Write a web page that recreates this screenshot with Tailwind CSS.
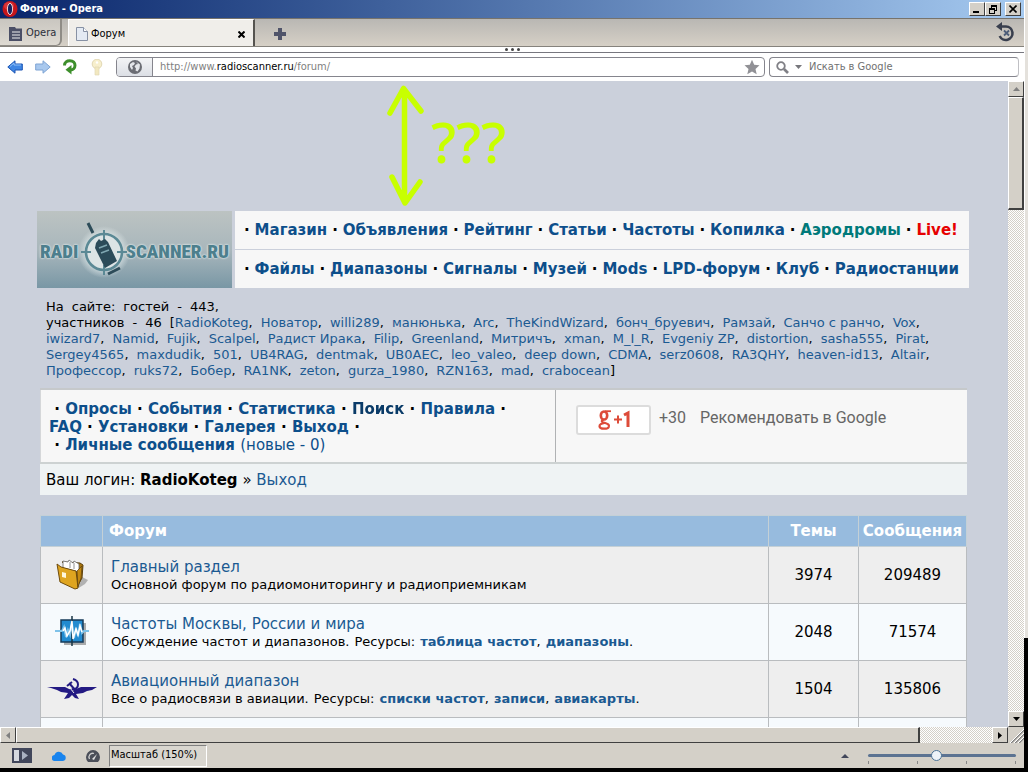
<!DOCTYPE html>
<html lang="ru">
<head>
<meta charset="utf-8">
<title>Форум</title>
<script src="https://cdn.jsdelivr.net/npm/@tailwindcss/browser@4"></script>
</head>
<body class="flex h-screen overflow-hidden bg-black font-['Verdana','DejaVu_Sans',sans-serif] text-black">
<div class="flex min-w-0 flex-1 flex-col bg-[#d4d0c8]">

  <header class="flex h-[18px] shrink-0 items-center bg-linear-to-r from-[#0a246a] to-[#a6caf0] pr-[3px] pl-[2px]">
    <svg class="size-4" viewBox="0 0 16 16"><ellipse cx="8" cy="8" rx="7.5" ry="8" fill="#c4161c"/><ellipse cx="7" cy="5" rx="5" ry="4" fill="#e8494c" opacity=".6"/><ellipse cx="8" cy="8" rx="2.6" ry="5.6" fill="#16225e" stroke="#f3d0d0" stroke-width="1"/></svg>
    <h1 class="ml-[2px] flex-1 font-['Tahoma','DejaVu_Sans_Condensed','DejaVu_Sans',sans-serif] text-[11px] font-bold text-white">Форум - Opera</h1>
    <div class="flex">
      <button aria-label="Свернуть" class="flex h-[14px] w-4 items-end border border-t-white border-r-[#404040] border-b-[#404040] border-l-white bg-[#d4d0c8] pb-[2px] pl-[3px]"><span class="h-[2px] w-[6px] bg-black"></span></button>
      <button aria-label="Восстановить" class="flex h-[14px] w-4 items-center justify-center border border-t-white border-r-[#404040] border-b-[#404040] border-l-white bg-[#d4d0c8]"><svg class="h-[10px] w-[10px]" viewBox="0 0 10 10" fill="none" stroke="#000" shape-rendering="crispEdges"><path d="M3 1h6M3 2h6M3.500 1v3M8.500 1v5M7 6.500h2M1 4h6M1 5h6M1.500 4v5M6.500 4v5M1 9.500h6"/></svg></button>
      <button aria-label="Закрыть" class="ml-1 flex h-[14px] w-4 items-center justify-center border border-t-white border-r-[#404040] border-b-[#404040] border-l-white bg-[#d4d0c8]"><svg class="size-2" viewBox="0 0 8 8" stroke="#000" stroke-width="1.600"><path d="M.5.5l7 7M7.500.5l-7 7"/></svg></button>
    </div>
  </header>

  <nav class="flex h-[29px] shrink-0 items-start border-t border-b border-t-[#77736c] border-b-[#85827c] bg-linear-to-b from-[#b9b7b3] to-[#d6d0c6] font-['Tahoma','DejaVu_Sans_Condensed','DejaVu_Sans',sans-serif] text-[11px]">
    <button class="flex h-[27px] w-[62px] items-center gap-1 rounded-br-md border-r-2 border-b border-[#8f8c86] bg-linear-to-b from-[#c9c6c0] to-[#dedad2] pt-[3px] pl-[9px] text-[#2b2f3a]">
      <svg class="h-[14px] w-[13px] shrink-0" viewBox="0 0 13 14"><path d="M0 0h6l1 1.500h6V14H0z" fill="#4b4f66"/><path d="M3 5h8M3 8h8M3 11h8" stroke="#eee" stroke-width="1.200"/></svg>Opera</button>
    <div class="ml-[6px] flex h-[27px] w-[187px] items-center border-t border-r-2 border-l border-t-white border-r-[#55534f] border-l-white bg-[#f0eeea] pt-[2px] pr-2 pl-[7px]">
      <svg class="h-[14px] w-3" viewBox="0 0 12 14"><path d="M.5.5h7l4 4v9H.5z" fill="#e4eaf3" stroke="#8791a4"/><path d="M7.500.5v4h4" fill="#fff" stroke="#8791a4"/></svg>
      <span class="ml-[3px] flex-1">Форум</span>
      <button aria-label="Закрыть вкладку"><svg class="size-[7px]" viewBox="0 0 7 7" stroke="#000" stroke-width="2"><path d="M.5.5l6 6M6.500.5l-6 6"/></svg></button>
    </div>
    <button aria-label="Новая вкладка" class="mt-[9px] ml-[19px]"><svg class="size-3" viewBox="0 0 12 12"><path d="M4 0h4v4h4v4H8v4H4V8H0V4h4z" fill="#50546a"/></svg></button>
    <button aria-label="Закрытые вкладки" class="mt-[3px] mr-[9px] ml-auto"><svg class="h-5 w-[19px]" viewBox="0 0 19 20" fill="none"><path d="M3 4.500h7a6.700 6.700 0 1 1-6.300 9.500" stroke="#393f4e" stroke-width="2.600"/><path d="M0 4.500L6 0v9z" fill="#393f4e"/><path d="M8 8.500l5 5M13 8.500l-5 5" stroke="#4c5c78" stroke-width="1.800"/></svg></button>
  </nav>
  <div class="flex h-[6px] shrink-0 items-center justify-center gap-[3px] border-b border-[#77777f] bg-white">
    <i class="size-[3px] rounded-full bg-[#444]"></i><i class="size-[3px] rounded-full bg-[#444]"></i><i class="size-[3px] rounded-full bg-[#444]"></i>
  </div>

  <div class="flex h-[28px] shrink-0 items-center bg-white pr-[5px] pl-[7px] font-['Tahoma','DejaVu_Sans_Condensed','DejaVu_Sans',sans-serif] text-[11px]">
    <button aria-label="Назад"><svg class="h-[14px] w-4" viewBox="0 0 16 14"><path d="M.8 7L8 .8V4h7.300v6H8v3.200z" fill="#3f86e4" stroke="#1c55b4"/><path d="M3 6.500L7 3v2h7" fill="none" stroke="#8fc0f8"/></svg></button>
    <button aria-label="Вперёд" class="ml-3"><svg class="h-[14px] w-4" viewBox="0 0 16 14"><path d="M15.200 7L8 .8V4H.7v6H8v3.200z" fill="#a8c8ee" stroke="#7fa4d4"/></svg></button>
    <button aria-label="Обновить" class="ml-3"><svg class="h-4 w-[14px]" viewBox="0 0 14 16" fill="none"><path d="M1.500 6.500C1.500 3 4 1.800 6.800 1.800c3.500 0 5.200 2.200 5.200 4.500 0 2.700-2 4.700-4.500 4.700" stroke="#3d8f2b" stroke-width="3"/><path d="M2.500 10.800L8.500 6v9.500z" fill="#3d8f2b"/></svg></button>
    <button aria-label="Пароль" class="ml-[14px]"><svg class="h-[17px] w-3" viewBox="0 0 12 17"><circle cx="6" cy="5" r="4.800" fill="#f7efcd" stroke="#e2d8b4"/><circle cx="6" cy="3.500" r="1.200" fill="#fff"/><path d="M4 8h4v8H4z" fill="#f2e8c0" stroke="#e2d8b4" stroke-width=".7"/></svg></button>
    <div class="ml-[13px] flex h-5 min-w-0 flex-1 overflow-hidden rounded-[4px] border border-[#85858d]">
      <button aria-label="Сведения о сайте" class="flex w-9 items-center justify-center border-r border-[#85858d] bg-linear-to-b from-[#f3f4f6] to-[#dcdfe5]"><svg class="size-[14px]" viewBox="0 0 14 14"><circle cx="7" cy="7" r="7" fill="#6b6d74"/><path d="M2 4l3-2 2 1-1 2-2 1 1 2-1 2-2-3zM8 1.500l4 3-.5 4-2 3-2-1 .5-2-1.500-2 1.500-2 2-.5z" fill="#e4e6ea"/></svg></button>
      <div contenteditable="true" role="textbox" aria-label="Адрес" class="flex-1 px-[7px] leading-[18px] text-[#808080]">http://www.<span class="text-black">radioscanner.ru</span>/forum/</div>
      <button aria-label="В закладки" class="mr-1"><svg class="size-4" viewBox="0 0 16 16"><path d="M8 .8l2.200 4.900 5.300.6-4 3.600 1.200 5.300L8 12.500l-4.700 2.700 1.200-5.300-4-3.600 5.300-.6z" fill="#919196"/></svg></button>
    </div>
    <div class="ml-1 flex h-5 w-[250px] items-center rounded-[4px] border border-[#85858d] border-r-[#c0c0c4] pl-[6px]">
      <svg class="size-[13px]" viewBox="0 0 13 13" fill="none" stroke="#808086"><circle cx="5" cy="5" r="3.800" stroke-width="1.800"/><path d="M8 8l4 4" stroke-width="2.600"/></svg>
      <svg class="ml-[6px] h-1 w-[7px]" viewBox="0 0 7 4"><path d="M0 0h7L3.500 4z" fill="#77777c"/></svg>
      <input aria-label="Поиск" placeholder="Искать в Google" class="ml-[7px] min-w-0 flex-1 outline-none placeholder:text-[#707070]">
    </div>
  </div>

  <div class="flex min-h-0 flex-1">
    <main class="relative min-w-0 flex-1 overflow-hidden bg-[#cbd0db] pt-[130px] pr-[39px] pl-[37px]">
      <svg class="absolute top-1 left-[387px] h-[122px] w-[38px]" viewBox="0 0 38 122" fill="none" stroke="#c8ff00" stroke-width="5.500" stroke-linecap="round" stroke-linejoin="round"><path d="M17.500 5v112M3 28L16.500 3.500 34 26M5 92l13 26L33 97"/></svg>
      <span class="absolute top-[22px] left-[431px] font-['Noto_Sans',sans-serif] text-[56px] leading-[76px] font-medium text-[#c8ff00]">???</span>

      <div class="flex gap-[3px]">
        <a href="#" aria-label="Radioscanner.ru" class="relative flex h-[77px] w-[195px] shrink-0 items-center justify-between bg-linear-to-b from-[#bcc3c2] via-[#a9b7bc] to-[#7997a5] px-[3px] pt-[5px] font-['Roboto_Condensed','Liberation_Sans_Narrow',sans-serif] text-[19px] font-black text-[#4d7f8d] [text-shadow:0_0_2px_#e6eeee,0_0_2px_#e6eeee]">
          <span>RADI</span><span>SCANNER.RU</span>
          <svg class="absolute top-[9px] left-[40px] h-[62px] w-[52px]" viewBox="0 0 52 62"><defs><radialGradient id="glow"><stop offset=".5" stop-color="#e6eeee"/><stop offset="1" stop-color="#e6eeee" stop-opacity="0"/></radialGradient></defs><circle cx="27" cy="32" r="26" fill="url(#glow)"/><circle cx="27" cy="32" r="18" fill="#dce4e5" stroke="#5b8995" stroke-width="2.600"/><path d="M27 10v10M27 45v10M4 32h10M40 32h10" stroke="#5b8995" stroke-width="2"/><path d="M11 3l5 10" stroke="#2d4c59" stroke-width="3"/><path d="M19 23l3-4 2 2 4-2 3 3 9 19-12 7-10-20z" fill="#2b4b59"/><path d="M22 28l8-3M24 33l8-3" stroke="#80a8b2" stroke-width="1.500"/><path d="M31 54l12-6" stroke="#2d4c59" stroke-width="3"/></svg>
        </a>
        <nav class="flex flex-1 flex-col gap-px text-[15px] font-bold text-[#0d4f8b]">
          <div class="flex h-[38px] items-center justify-between bg-[#f7f7f7] pr-[11px] pl-[9px]">
            <b class="text-black">·</b><a href="#">Магазин</a><b class="text-black">·</b><a href="#">Объявления</a><b class="text-black">·</b><a href="#">Рейтинг</a><b class="text-black">·</b><a href="#">Статьи</a><b class="text-black">·</b><a href="#">Частоты</a><b class="text-black">·</b><a href="#">Копилка</a><b class="text-black">·</b><a href="#" class="text-[#007a7a]">Аэродромы</a><b class="text-black">·</b><a href="#" class="text-[#e60000]">Live!</a>
          </div>
          <div class="flex h-[38px] items-center justify-between bg-[#f7f7f7] pr-[10px] pl-[9px]">
            <b class="text-black">·</b><a href="#">Файлы</a><b class="text-black">·</b><a href="#">Диапазоны</a><b class="text-black">·</b><a href="#">Сигналы</a><b class="text-black">·</b><a href="#">Музей</a><b class="text-black">·</b><a href="#">Mods</a><b class="text-black">·</b><a href="#">LPD-форум</a><b class="text-black">·</b><a href="#">Клуб</a><b class="text-black">·</b><a href="#">Радиостанции</a>
          </div>
        </nav>
      </div>

      <div class="mr-[2px] ml-[3px]">
        <section class="px-[6px] pt-[10px] pb-[9px] text-[13px] [&_a]:text-[#1b5a92]">
          <p class="flex gap-x-2 leading-[17px]"><span>На</span><span>сайте:</span><span>гостей</span><span>-</span><span>443,</span></p>
          <div class="flex flex-wrap gap-x-2 leading-[16px] whitespace-nowrap first-line:leading-[17px]">
            <span>участников</span><span>-</span><span>46</span><span>[<a href="#">RadioKoteg</a>,</span><span><a href="#">Новатор</a>,</span><span><a href="#">willi289</a>,</span><span><a href="#">манюнька</a>,</span><span><a href="#">Arc</a>,</span><span><a href="#">TheKindWizard</a>,</span><span><a href="#">бонч_бруевич</a>,</span><span><a href="#">Рамзай</a>,</span><span><a href="#">Санчо с ранчо</a>,</span><span><a href="#">Vox</a>,</span>
            <span><a href="#">iwizard7</a>,</span><span><a href="#">Namid</a>,</span><span><a href="#">Fujik</a>,</span><span><a href="#">Scalpel</a>,</span><span><a href="#">Радист Ирака</a>,</span><span><a href="#">Filip</a>,</span><span><a href="#">Greenland</a>,</span><span><a href="#">Митричъ</a>,</span><span><a href="#">xman</a>,</span><span><a href="#">M_I_R</a>,</span><span><a href="#">Evgeniy ZP</a>,</span><span><a href="#">distortion</a>,</span><span><a href="#">sasha555</a>,</span><span><a href="#">Pirat</a>,</span>
            <span><a href="#">Sergey4565</a>,</span><span><a href="#">maxdudik</a>,</span><span><a href="#">501</a>,</span><span><a href="#">UB4RAG</a>,</span><span><a href="#">dentmak</a>,</span><span><a href="#">UB0AEC</a>,</span><span><a href="#">leo_valeo</a>,</span><span><a href="#">deep down</a>,</span><span><a href="#">CDMA</a>,</span><span><a href="#">serz0608</a>,</span><span><a href="#">RA3QHY</a>,</span><span><a href="#">heaven-id13</a>,</span><span><a href="#">Altair</a>,</span>
            <span><a href="#">Профессор</a>,</span><span><a href="#">ruks72</a>,</span><span><a href="#">Бобер</a>,</span><span><a href="#">RA1NK</a>,</span><span><a href="#">zeton</a>,</span><span><a href="#">gurza_1980</a>,</span><span><a href="#">RZN163</a>,</span><span><a href="#">mad</a>,</span><span><a href="#">crabocean</a>]</span>
          </div>
        </section>

        <div class="flex h-[76px] border-y-2 border-t-[#c6c9cb] border-b-[#cdd2d2] bg-[#f7f7f7]">
          <div class="w-[516px] border-r border-l border-r-[#b0b2b4] border-l-[#d5d7d9] px-[8px] pt-[10px] text-[15px] leading-[18px] font-bold whitespace-nowrap [&_a]:text-[#0d4f8b]">&nbsp;· <a href="#">Опросы</a> · <a href="#">События</a> · <a href="#">Статистика</a> · <a href="#" class="brightness-75">Поиск</a> · <a href="#">Правила</a> ·<br><a href="#">FAQ</a> · <a href="#">Установки</a> · <a href="#">Галерея</a> · <a href="#">Выход</a> ·<br>&nbsp;· <a href="#">Личные сообщения <span class="font-normal">(новые - 0)</span></a></div>
          <div class="flex items-start pt-[15px] pl-5 font-['Roboto',sans-serif] text-[16px] leading-[26px] text-[#666]">
            <button aria-label="g+1" class="flex h-[30px] w-[75px] items-center justify-center rounded-[3px] border-2 border-[#dcdcdc] bg-white"><svg class="h-[20px] w-[32px]" viewBox="0 0 32 20" fill="none" stroke="#dd4b39"><ellipse cx="6" cy="5.500" rx="3.200" ry="4" stroke-width="2.600"/><path d="M7 1.200h6" stroke-width="1.800"/><path d="M5.500 9.500c-3 1.500-1.500 2.600 1 3.300 3.500 1 5 2 4.300 4-1 2.600-8.800 2.600-9.300-.3-.3-2 2-3.200 5-3.600" stroke-width="2.200"/><path d="M16 9.500h8M20 5.500v8" stroke-width="2"/><path d="M26 5l4-2V17" stroke-width="3"/></svg></button>
            <span class="ml-2">+30</span><span class="ml-[14px]">Рекомендовать в Google</span>
          </div>
        </div>
        <p class="h-[31px] bg-[#eff3f4] px-[6px] text-[15px] leading-[32px]">Ваш логин: <b>RadioKoteg</b> » <a href="#" class="text-[#1b5a92]">Выход</a></p>

        <table class="mt-5 w-full table-fixed border-collapse text-[15px] [&_a]:text-[#1b5a92] [&_td]:border [&_td]:border-[#b9bcbf] [&_th]:border [&_th]:border-[#c4d0d6]">
          <colgroup><col class="w-[62px]"><col><col class="w-[90px]"><col class="w-[108px]"></colgroup>
          <thead><tr class="h-[31px] bg-[#97bbde] text-white"><th aria-label="Раздел"></th><th class="pl-[6px] text-left">Форум</th><th>Темы</th><th>Сообщения</th></tr></thead>
          <tbody>
            <tr class="h-[57px] bg-[#eeeeee]"><td><svg class="mx-auto h-8 w-8" viewBox="0 0 32 32"><path d="M21 28l3-11 8 4-3 4-8 5z" fill="#888" opacity=".6"/><path d="M6 3l18 1 3 2-1 13-4 7-2-18z" fill="#a8740c" stroke="#5d410d"/><path d="M7 9V2l5 1 1-2 4 3 1-2 5 3v8z" fill="#fff" stroke="#666" stroke-width=".8"/><path d="M14 3v6M18 4v6" stroke="#777" stroke-width=".8"/><path d="M1 5l4 3 15 4 2 17-3 1L4 23z" fill="#dfa520" stroke="#6f4c0c"/><path d="M21 12l5-5-1 12-3 9z" fill="#c48a12" stroke="#5d410d" stroke-width=".7"/><path d="M6 13l4 1v5l-4-1z" fill="#fff8dc"/></svg></td>
              <td class="pt-[2px] pl-2"><a href="#" class="block leading-[17px]">Главный раздел</a><p class="text-[13px] leading-[17px]">Основной форум по радиомониторингу и радиоприемникам</p></td><td class="text-center">3974</td><td class="text-center">209489</td></tr>
            <tr class="h-[57px] bg-[#f6fafd]"><td><svg class="mx-auto h-8 w-[34px]" viewBox="0 0 34 32"><path d="M9 7h22v22H9z" fill="#777" opacity=".6"/><path d="M6 4h22v22H6z" fill="#228bd0" stroke="#163b5a" stroke-width="1.500"/><path d="M17 0v30" stroke="#173445" stroke-width="1.500"/><path d="M0 15h7l2-4 2 10 2-7 2 5 2-11 2 14 2-10 2 8 2-12 2 9 2-2h5" fill="none" stroke="#7fc2e9" stroke-width="2"/><path d="M8 15l2-3 2 8 3-5 2-10 1 18 3-10 2 6 2-9 2 6" fill="none" stroke="#fff" stroke-width="1.500"/></svg></td>
              <td class="pt-[2px] pl-2"><a href="#" class="block leading-[17px]">Частоты Москвы, России и мира</a><p class="flex gap-x-[5px] text-[13px] leading-[17px]"><span>Обсуждение частот и диапазонов.</span> <span>Ресурсы:</span> <span><a href="#" class="font-bold">таблица частот</a>,</span> <span><a href="#" class="font-bold">диапазоны</a>.</span></p></td><td class="text-center">2048</td><td class="text-center">71574</td></tr>
            <tr class="h-[57px] bg-[#eeeeee]"><td><svg class="mx-auto h-[22px] w-[50px]" viewBox="0 0 50 22" fill="#231a83"><path d="M0 9h18l4 2 3 2 4-2 5-2h16l-5 3-5 1-4 2-7 1 3 5-4-1-3-3-3 3-5 1 4-6-7-1-4-2-6-2z"/><path d="M26 1c7 2 6 9 1 10l-6 2M22 5l7 8M20 8l5-4" fill="none" stroke="#231a83" stroke-width="2"/><path d="M23 10l4 5" stroke="#eee"/></svg></td>
              <td class="pt-[2px] pl-2"><a href="#" class="block leading-[17px]">Авиационный диапазон</a><p class="flex gap-x-[5px] text-[13px] leading-[17px]"><span>Все о радиосвязи в авиации.</span> <span>Ресурсы:</span> <span><a href="#" class="font-bold">списки частот</a>,</span> <span><a href="#" class="font-bold">записи</a>,</span> <span><a href="#" class="font-bold">авиакарты</a>.</span></p></td><td class="text-center">1504</td><td class="text-center">135806</td></tr>
            <tr class="h-[57px] bg-[#f6fafd]"><td></td><td></td><td></td><td></td></tr>
          </tbody>
        </table>
      </div>
    </main>
    <div class="flex w-4 shrink-0 flex-col bg-[repeating-conic-gradient(#d4d0c8_0_25%,#fff_0_50%)] bg-[length:2px_2px]">
      <button aria-label="Вверх" class="flex h-4 items-center justify-center border border-t-white border-r-[#404040] border-b-[#404040] border-l-white bg-[#d4d0c8]"><svg class="h-1 w-[7px]" viewBox="0 0 7 4"><path d="M0 4h7L3.500 0z" fill="#808080"/></svg></button>
      <div class="h-[113px] border border-t-white border-r-2 border-b-2 border-r-[#404040] border-b-[#404040] border-l-white bg-[#d4d0c8]"></div>
      <button aria-label="Вниз" class="mt-auto flex h-4 items-center justify-center border border-t-white border-r-[#404040] border-b-[#404040] border-l-white bg-[#d4d0c8]"><svg class="h-1 w-[7px]" viewBox="0 0 7 4"><path d="M0 0h7L3.500 4z"/></svg></button>
    </div>
  </div>

  <div class="flex h-4 shrink-0 bg-[repeating-conic-gradient(#d4d0c8_0_25%,#fff_0_50%)] bg-[length:2px_2px]">
    <button aria-label="Влево" class="flex w-4 items-center justify-center border border-t-white border-r-[#404040] border-b-[#404040] border-l-white bg-[#d4d0c8]"><svg class="h-[7px] w-1" viewBox="0 0 4 7"><path d="M4 0v7L0 3.500z" fill="#808080"/></svg></button>
    <div class="w-[904px] border border-t-white border-r-2 border-r-[#404040] border-b-[#404040] border-l-white bg-[#d4d0c8]"></div>
    <button aria-label="Вправо" class="ml-auto flex w-4 items-center justify-center border border-t-white border-r-[#404040] border-b-[#404040] border-l-white bg-[#d4d0c8]"><svg class="h-[7px] w-1" viewBox="0 0 4 7"><path d="M0 0v7l4-3.500z"/></svg></button>
    <svg class="size-4 bg-[#d4d0c8]" viewBox="0 0 16 16"><path d="M3 16L16 3M7 16l9-9M11 16l5-5" stroke="#808080" stroke-width="1.500"/><path d="M2 16L16 2M6 16L16 6M10 16l6-6" stroke="#fff"/></svg>
  </div>

  <footer class="flex h-[29px] shrink-0 items-center border-b-4 border-black pr-2 pl-3 font-['Tahoma','DejaVu_Sans_Condensed','DejaVu_Sans',sans-serif] text-[11px]">
    <button aria-label="Панели"><svg class="h-[15px] w-5" viewBox="0 0 20 15"><path d="M0 0h20v15H0z" fill="#41465a"/><path d="M2 2h5v11H2z" fill="#d5d8df"/><path d="M10 3l6 4.500-6 4.500z" fill="#aab2c2"/></svg></button>
    <button aria-label="Opera Link" class="ml-5"><svg class="h-[11px] w-[14px]" viewBox="0 0 14 11"><path d="M3 11a3 3 0 0 1-.5-6A4.500 4.500 0 0 1 11 4.500 3.300 3.300 0 0 1 11 11z" fill="#1984ee"/></svg></button>
    <button aria-label="Opera Turbo" class="ml-5"><svg class="h-3 w-[14px]" viewBox="0 0 14 12"><path d="M2 12a7 7 0 1 1 10 0z" fill="#4b4f59"/><path d="M3.500 9A3.800 3.800 0 0 1 8 3.500" fill="none" stroke="#cfcfcf" stroke-width="1.300"/><path d="M6 9l5-5-3 6z" fill="#e3e3e3"/></svg></button>
    <button class="ml-[9px] h-[22px] w-[98px] border border-t-[#808080] border-r-white border-b-white border-l-[#808080] bg-[#d9d6cf] pl-px text-left">Масштаб (150%)</button>
    <svg class="ml-auto h-1 w-2" viewBox="0 0 8 4"><path d="M0 4h8L4 0z" fill="#41465a"/></svg>
    <div class="ml-[19px] flex w-[148px] flex-col pt-[2px]">
      <input type="range" aria-label="Масштаб" min="0" max="100" value="46" class="h-[11px] w-full appearance-none bg-transparent [&::-webkit-slider-runnable-track]:h-[3px] [&::-webkit-slider-runnable-track]:rounded-full [&::-webkit-slider-runnable-track]:bg-[#5c7392] [&::-webkit-slider-thumb]:-mt-1 [&::-webkit-slider-thumb]:size-[11px] [&::-webkit-slider-thumb]:appearance-none [&::-webkit-slider-thumb]:rounded-full [&::-webkit-slider-thumb]:border [&::-webkit-slider-thumb]:border-[#4c7396] [&::-webkit-slider-thumb]:bg-[#edf3f8]">
      <div class="flex h-[3px] justify-between"><i class="w-px bg-[#888]"></i><i class="w-px bg-[#888]"></i><i class="w-px bg-[#888]"></i><i class="w-px bg-[#888]"></i></div>
    </div>
  </footer>
</div>
<div class="flex w-1 shrink-0 flex-col"><div class="h-[638px] border-l border-white bg-[#e4e1dc]"></div></div>
</body>
</html>
